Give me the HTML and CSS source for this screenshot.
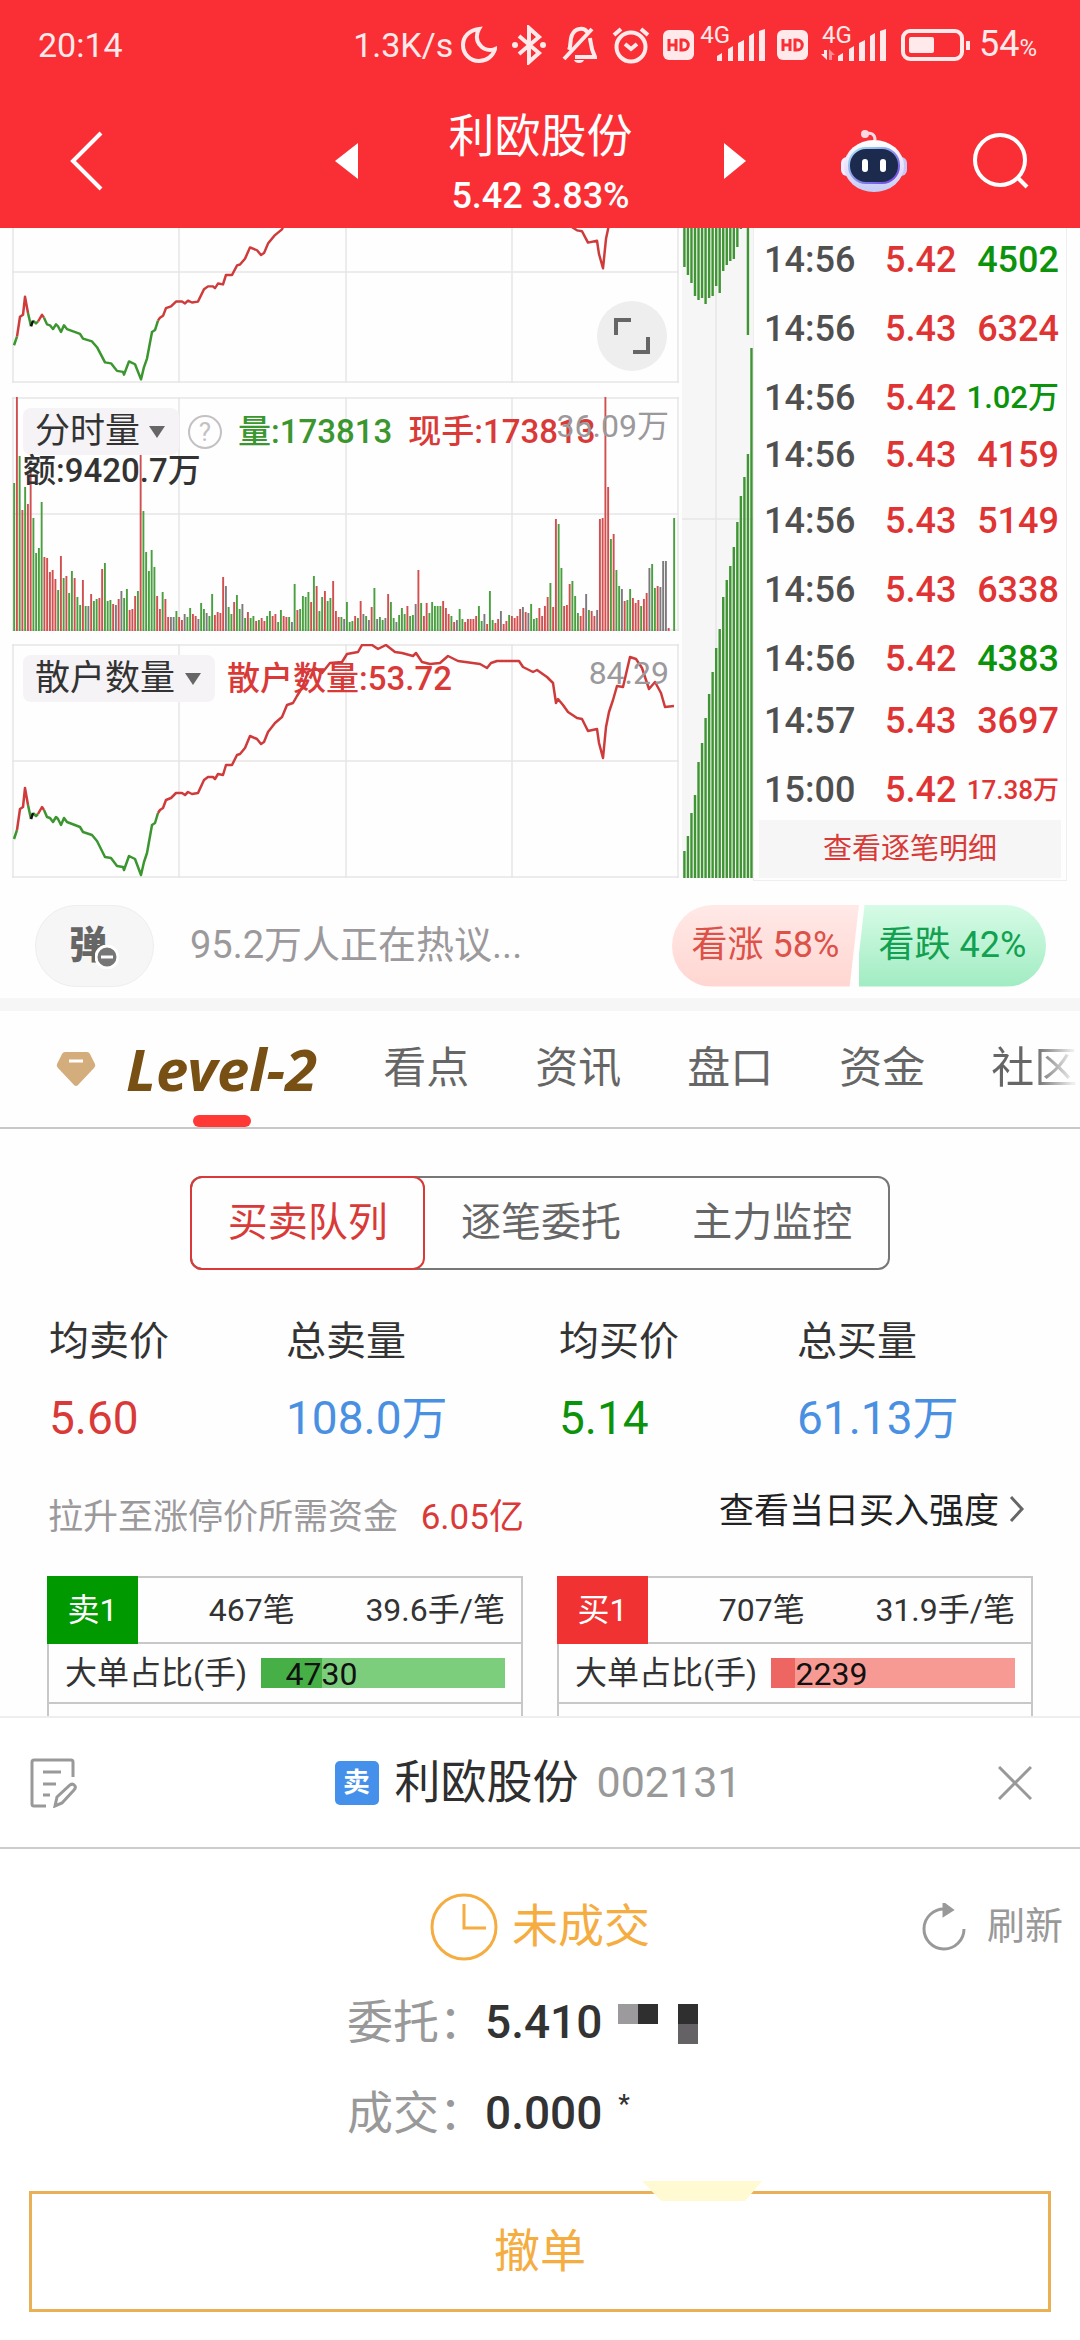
FILE: index.html
```html
<!DOCTYPE html>
<html lang="zh-CN">
<head>
    <meta charset="UTF-8">
    <meta name="viewport" content="width=device-width, initial-scale=1.0">
    <title>利欧股份 002131</title>
    <link rel="stylesheet" href="styles.css">
</head>
<body>
    <header class="header">
        <div class="status">
            <span class="clock">20:14</span>
            <span class="speed">1.3K/s</span>
            <svg class="s-icon moon" width="36" height="38" viewBox="0 0 36 38"><path d="M18 3C8 4 2 11 2 19c0 9 7 16 16 16 8 0 14-5 16-12-5 2-11 1-15-4-4-4-4-11-1-16z"/></svg>
            <svg class="s-icon bt" width="36" height="40" viewBox="0 0 36 40"><path d="M8 11l20 17-10 9V3l10 9L8 29"/><circle class="solid" cx="4" cy="20" r="3"/><circle class="solid" cx="32" cy="20" r="3"/></svg>
            <svg class="s-icon bell" width="36" height="40" viewBox="0 0 36 40"><path d="M3 34L31 4M8 25c2-4 1-11 3-15 3-7 12-8 15-3M29 13c1 7 1 11 5 19H14"/><path class="solid" d="M13 35h10c-1 4-9 4-10 0z"/></svg>
            <svg class="s-icon alarm" width="40" height="38" viewBox="0 0 40 38"><circle cx="20" cy="21" r="14.500"/><path d="M14 18l6 5 6-5M3 9l7-6M37 9l-7-6"/></svg>
            <svg class="s-icon hd" width="31" height="30" viewBox="0 0 31 30"><rect class="solid" width="31" height="30" rx="6"/><path class="cut" d="M6 9v12M13 9v12M6 15h7M18 10v10h2c7 0 7-10 0-10z"/></svg>
            <span class="net">4G</span>
            <svg class="s-icon bars" width="49" height="32" viewBox="0 0 49 32"><path class="solid" d="M1 27l5-3v8H1zM12 20l5-3v15h-5zM22 14l6-3v21h-6zM33 7l5-3v28h-5zM43 2l6-2v32h-6z"/></svg>
            <svg class="s-icon hd" width="31" height="30" viewBox="0 0 31 30"><rect class="solid" width="31" height="30" rx="6"/><path class="cut" d="M6 9v12M13 9v12M6 15h7M18 10v10h2c7 0 7-10 0-10z"/></svg>
            <span class="net second">4G</span>
            <svg class="s-icon bars-data" width="66" height="32" viewBox="-17 0 66 32"><path class="solid" d="M1 27l5-3v8H1zM12 20l5-3v15h-5zM22 14l6-3v21h-6zM33 7l5-3v28h-5zM43 2l6-2v32h-6z"/><path class="solid" d="M-13 21h3v10l-6-6h3z"/><path class="dim" d="M-8 31h3v-5h3l-6-6z"/></svg>
            <svg class="s-icon batt" width="70" height="32" viewBox="0 0 70 32"><rect x="2" y="2" width="59" height="28" rx="7"/><rect class="solid" x="8" y="8" width="25" height="16" rx="2"/><path d="M67 12v9"/></svg>
            <span class="charge">54<small>%</small></span>
        </div>
        <div class="titlebar">
            <button class="icon-btn back" aria-label="返回"><svg width="36" height="60" viewBox="0 0 36 60"><path d="M32 2L4 30l28 28"/></svg></button>
            <div class="stock">
                <button class="icon-btn" aria-label="上一只"><svg width="24" height="36" viewBox="0 0 24 36"><path class="solid" d="M0 18L23 0v36z"/></svg></button>
                <div class="stock-name">
                    <h1>利欧股份</h1>
                    <p>5.42 3.83%</p>
                </div>
                <button class="icon-btn" aria-label="下一只"><svg width="24" height="36" viewBox="0 0 24 36"><path class="solid" d="M23 18L1 0v36z"/></svg></button>
            </div>
            <button class="icon-btn robot" aria-label="助手">
                <svg width="68" height="64" viewBox="0 0 68 64">
                    <defs>
                        <linearGradient id="shell" x1="0" y1="0" x2="0" y2="1"><stop offset="0" stop-color="#fff"/><stop offset=".6" stop-color="#e4dcfb"/><stop offset="1" stop-color="#c3cdf5"/></linearGradient>
                        <linearGradient id="rim" x1="0" y1="0" x2="1" y2="1"><stop offset="0" stop-color="#a5e6f5"/><stop offset="1" stop-color="#6a3fe0"/></linearGradient>
                    </defs>
                    <path d="M25 5c6-2 10 0 10 6" stroke="#fbd9e2" stroke-width="3" fill="none"/>
                    <circle cx="25" cy="5" r="4" fill="#fbd9e2"/>
                    <rect x="1" y="28" width="12" height="19" rx="6" fill="#f1ecff"/>
                    <rect x="55" y="28" width="12" height="19" rx="6" fill="#c9c6f7"/>
                    <ellipse cx="34" cy="37" rx="30" ry="26" fill="url(#shell)"/>
                    <rect x="9" y="19" width="50" height="35" rx="17" fill="#1c2a4e" stroke="url(#rim)" stroke-width="2"/>
                    <rect x="22" y="30" width="6" height="13" rx="3" fill="#fff"/>
                    <rect x="40" y="30" width="6" height="13" rx="3" fill="#fff"/>
                </svg>
            </button>
            <button class="icon-btn" aria-label="搜索"><svg width="58" height="58" viewBox="0 0 58 58"><circle cx="28" cy="28" r="25"/><path d="M46 46l9 9"/></svg></button>
        </div>
    </header>

    <section class="market">
        <div class="charts">
            <div class="chart chart-top">
                <svg class="plot" viewBox="0 0 667 155" preserveAspectRatio="none">
                    <path class="grid" d="M1 0V155M167 0V155M334 0V155M500 0V155M666 0V155M0 44H667M0 154H667"/>
                    <g class="retail" transform="translate(0 -68) scale(1 .95)"></g>
                </svg>
                <button class="expand" aria-label="全屏"><svg width="36" height="36" viewBox="0 0 36 36"><path d="M2 17V2h15M34 19v15H19"/></svg></button>
            </div>
            <div class="chart">
                <svg class="plot" viewBox="0 0 667 234" preserveAspectRatio="none">
                    <path class="grid" d="M1 0V234M167 0V234M334 0V234M500 0V234M666 0V234M0 1H667M0 117H667M0 233H667"/>
                    <g id="volume"></g>
                </svg>
                <div class="legend">
                    <span class="picker three"><select aria-label="成交指标"><option>分时量</option></select></span>
                    <button class="help" aria-label="说明">?</button>
                    <b class="down">量:173813</b>
                    <b class="up">现手:173813</b>
                </div>
                <b class="amount">额:9420.7万</b>
                <span class="max">36.09万</span>
            </div>
            <div class="chart">
                <svg class="plot" viewBox="0 0 667 234" preserveAspectRatio="none">
                    <path class="grid" d="M1 0V234M167 0V234M334 0V234M500 0V234M666 0V234M0 1H667M0 117H667M0 233H667"/>
                    <g class="retail"></g>
                </svg>
                <div class="legend">
                    <span class="picker four"><select aria-label="散户指标"><option>散户数量</option></select></span>
                    <b class="up">散户数量:53.72</b>
                </div>
                <span class="max">84.29</span>
            </div>
        </div>
        <svg class="depth" viewBox="0 0 71 650" preserveAspectRatio="none">
            <path class="grid" d="M34 0V650M0 291H71"/>
            <g id="depth"></g>
        </svg>
        <div class="ticks">
            <table>
                <tr class="first"><td>14:56</td><td class="up">5.42</td><td class="down">4502</td></tr>
                <tr><td>14:56</td><td class="up">5.43</td><td class="up">6324</td></tr>
                <tr><td>14:56</td><td class="up">5.42</td><td class="down mid">1.02万</td></tr>
                <tr class="tight"><td>14:56</td><td class="up">5.43</td><td class="up">4159</td></tr>
                <tr><td>14:56</td><td class="up">5.43</td><td class="up">5149</td></tr>
                <tr><td>14:56</td><td class="up">5.43</td><td class="up">6338</td></tr>
                <tr><td>14:56</td><td class="up">5.42</td><td class="down">4383</td></tr>
                <tr class="first"><td>14:57</td><td class="up">5.43</td><td class="up">3697</td></tr>
                <tr><td>15:00</td><td class="up">5.42</td><td class="up small">17.38万</td></tr>
            </table>
            <button class="detail">查看逐笔明细</button>
        </div>
    </section>

    <section class="talk">
        <button class="danmu" aria-label="弹幕">弹<svg width="24" height="24" viewBox="0 0 24 24"><circle cx="12" cy="12" r="11"/><path d="M6 12h12"/></svg></button>
        <a class="hot" href="#">95.2万人正在热议...</a>
        <div class="vote">
            <button class="bull">看涨 58%</button>
            <button class="bear">看跌 42%</button>
        </div>
    </section>

    <nav class="tabs">
        <svg width="40" height="36" viewBox="0 0 40 36"><path d="M9 1h22q2 0 3 2l5 10q1 2-1 4L22 34q-2 2-4 0L2 17q-2-2-1-4L6 3q1-2 3-2z" fill="#d3ae7c"/><path d="M13 10h14" stroke="#fff" stroke-width="3"/></svg>
        <a class="active" href="#">Level-2</a>
        <a href="#">看点</a>
        <a href="#">资讯</a>
        <a href="#">盘口</a>
        <a href="#">资金</a>
        <a href="#">社区</a>
    </nav>

    <main class="level2">
        <div class="segment">
            <button class="on">买卖队列</button>
            <button>逐笔委托</button>
            <button>主力监控</button>
        </div>
        <dl class="summary">
            <div><dt>均卖价</dt><dd class="up">5.60</dd></div>
            <div><dt>总卖量</dt><dd class="blue">108.0万</dd></div>
            <div><dt>均买价</dt><dd class="down">5.14</dd></div>
            <div><dt>总买量</dt><dd class="blue">61.13万</dd></div>
        </dl>
        <div class="funds">
            <p>拉升至涨停价所需资金 <span class="up">6.05亿</span></p>
            <a href="#">查看当日买入强度<svg width="16" height="28" viewBox="0 0 16 28"><path d="M2 2l11 12L2 26"/></svg></a>
        </div>
        <div class="queues">
            <div class="queue sell">
                <div class="queue-head"><b>卖1</b><span>467笔</span><span>39.6手/笔</span></div>
                <div class="queue-row"><span>大单占比(手)</span><div class="ratio"><i style="width: 25%"></i><em style="left: 10%">4730</em></div></div>
                <div class="queue-next"></div>
            </div>
            <div class="queue buy">
                <div class="queue-head"><b>买1</b><span>707笔</span><span>31.9手/笔</span></div>
                <div class="queue-row"><span>大单占比(手)</span><div class="ratio"><i style="width: 10%"></i><em style="left: 10%">2239</em></div></div>
                <div class="queue-next"></div>
            </div>
        </div>
    </main>

    <section class="sheet">
        <div class="sheet-head">
            <button class="icon-btn" aria-label="记录"><svg width="48" height="50" viewBox="0 0 48 50"><path d="M43 19V4q0-2-2-2H4Q2 2 2 4v42q0 2 2 2h12M13 14h18M13 26h13M13 37h7M25 48l2-9 13-12q3-2 5 1 1 2-1 4L32 45z"/></svg></button>
            <h2><span class="tag">卖</span>利欧股份 <span class="code">002131</span></h2>
            <button class="icon-btn" aria-label="关闭"><svg width="34" height="34" viewBox="0 0 34 34"><path d="M1 1l32 32M33 1L1 33"/></svg></button>
        </div>
        <div class="state">
            <svg width="68" height="68" viewBox="0 0 68 68"><circle cx="34" cy="34" r="32"/><path d="M34 11v24h22"/></svg>
            <strong>未成交</strong>
            <button class="refresh"><svg width="46" height="48" viewBox="0 0 46 48"><path d="M24 6A20 20 0 1 0 43 26"/><path class="solid" d="M23 1l8 6-8 5z"/></svg>刷新</button>
        </div>
        <dl class="order">
            <dt>委托：</dt>
            <dd>5.410<svg width="80" height="40" viewBox="0 0 80 40"><path fill="#9d9a9d" d="M0 0h20v20H0z"/><path fill="#2f2f2f" d="M20 0h20v20H20zM60 0h20v20H60z"/><path fill="#646264" d="M60 20h20v20H60z"/></svg></dd>
            <dt>成交：</dt>
            <dd>0.000<sup>*</sup></dd>
        </dl>
        <div class="cancel-wrap">
            <button class="cancel">撤单</button>
        </div>
    </section>

    <script>
        // one entry a minute: colour letter, then height in px
        const volume = "g148 r235 g175 r121 g144 r127 r159 g113 g78 g83 g129 r74 r73 r59 r61 r52 g41 r75 g53 r55 g38 g60 r53 g34 g26 r51 g25 k25 r37 g30 g32 r33 r62 g68 g30 g31 r27 k26 r32 k40 g33 g42 r21 r22 r35 g40 r180 g120 g79 g60 g81 g64 r35 r22 g39 r32 " +
            "r14 k14 k14 g20 r14 r11 k17 g14 g23 r17 r15 k12 g28 g22 k18 g15 g37 r16 r19 r18 r54 k45 g24 g17 r29 g36 g22 k27 g13 r19 g13 g15 r10 g11 r13 r10 g15 g20 r15 r17 g9 g21 r15 r14 g14 k9 g47 r21 g22 g35 g34 g39 r29 g55 r45 g20 g34 r40 g30 g33 r50 r20 r14 g14 k12 g29 g9 g10 r15 g13 r30 " +
            "k17 g15 k11 r24 g43 k12 g14 g11 k13 r37 g29 g13 k9 g16 g23 g17 r25 g15 g16 k27 r61 g28 r15 r28 g18 g29 g25 g25 g25 r30 r23 r17 g15 r9 k11 g22 g12 r9 r12 r12 r12 r15 g25 g10 k17 r7 g40 g11 r8 r12 k20 r7 r10 g16 r15 r13 r15 r22 k24 r19 k18 g27 g12 g13 r23 r15 r25 r34 g48 r24 " +
            "r112 g107 g63 r25 r26 r47 g50 g35 g18 r15 r23 k37 g21 r20 r15 k21 r112 r113 r234 r144 g92 r97 g61 g45 k42 r30 g31 g42 r33 r28 r31 g25 r32 r38 k63 g67 g43 r45 k44 k70 k70 r3 k0 g113";
        const tones = { r: "#d24f4f", g: "#4a9f40", k: "#7d7a7d" };
        let bars = "";
        volume.split(" ").forEach((item, i) => {
            const h = Number(item.slice(1));
            bars += `<rect x="${(1.2 + i * 2.75).toFixed(2)}" y="${234 - h}" width="1.9" height="${h}" fill="${tones[item[0]]}"/>`;
        });
        document.getElementById("volume").innerHTML = bars;

        const retail = [
            ["green", "2,195 5,186"],
            ["red", "5,186 8,165 11,163 13,144 16,161"],
            ["green", "16,161 19,175"],
            ["green", "21,169 24,172 26,170"],
            ["red", "26,170 30,163 32,166"],
            ["green", "32,166 35,173 38,174 41,178 44,173 46,175 49,181 52,174 55,178 68,183 71,188 80,191 85,197 93,213 99,214 105,222 111,223 112,226 117,212 123,215 129,231 132,218 135,209 140,181 143,179 146,169"],
            ["red", "146,169 148,166 151,164 154,156 159,154 164,149 170,149 173,151 176,148 180,150 186,149 192,136 196,133 201,133 203,135 206,130 211,131 214,121 220,121 225,111 228,110 233,104 238,92 245,95 249,100 252,98 256,88 263,79 270,73 275,61 281,59 285,52 290,44 296,28 303,24 310,29 318,19 330,18 335,10 346,8 350,1 360,1 366,5 374,1 383,8 390,9 401,12 404,9 410,18 418,20 428,19 436,12 446,17 468,20 475,24 479,19 485,17 507,17 511,23 521,28 525,26 535,33 541,39 544,59 546,55 551,61 556,68 565,74 570,75 576,87 585,85 587,99 591,114 594,83 597,68 601,56 605,42 611,43 618,13 624,15 630,24 637,45 643,38 649,49 653,63 662,62"],
            ["black", "19,175 21,169"]
        ];
        document.querySelectorAll(".retail").forEach(g => {
            g.innerHTML = retail.map(([tone, pts]) => `<polyline class="line ${tone}" points="${pts}"/>`).join("");
        });

        // sell side hangs from the top, buy side grows from the bottom
        const above = [39, 47, 55, 68, 72, 70, 76, 70, 68, 58, 65, 43, 37, 33, 31, 19, 1, 0, 107, 0];
        const below = [27, 42, 65, 83, 116, 135, 160, 184, 206, 230, 249, 281, 298, 312, 331, 356, 382, 401, 424, 530];
        let depth = "";
        for (let i = 0; i < 20; i++) {
            const x = (1.2 + i * 3.53).toFixed(2);
            depth += `<rect x="${x}" y="0" width="2.4" height="${above[i]}"/><rect x="${x}" y="${650 - below[i]}" width="2.4" height="${below[i]}"/>`;
        }
        document.getElementById("depth").innerHTML = depth;
    </script>
</body>
</html>
```
FILE: styles.css
```css
* {
    box-sizing: border-box;
}
body {
    margin: 0;
    background: #fefefe;
    color: #333;
    font-family: Roboto, "Noto Sans CJK SC", sans-serif;
    font-size: 36px;
    line-height: 1.2;
}
h1, h2, p, dl, dd {
    margin: 0;
    font-weight: 400;
}
button, select {
    border: none;
    background: none;
    padding: 0;
    margin: 0;
    font: inherit;
    color: inherit;
}
a {
    color: inherit;
    text-decoration: none;
}
svg {
    flex: none;
}
.up {
    color: #d93a38;
}
.down {
    color: #0c930c;
}
.blue {
    color: #4a90e2;
}

/* header */
.header {
    height: 228px;
    background: #f92f35;
    color: #fff;
}
.status {
    display: flex;
    align-items: center;
    height: 90px;
    padding: 0 43px 0 38px;
    font-size: 34px;
    color: #ffe9ea;
}
.clock {
    flex: 1;
}
.s-icon {
    fill: none;
    stroke: #ffe9ea;
    stroke-width: 4;
}
.s-icon .solid {
    fill: #ffe9ea;
    stroke: none;
}
.s-icon .cut {
    stroke: #f92f35;
    stroke-width: 3;
}
.s-icon .dim {
    fill: #ff8f93;
    stroke: none;
}
.moon {
    margin-left: 8px;
}
.bt, .bell, .alarm {
    margin-left: 14px;
}
.hd {
    margin-left: 12px;
}
.net {
    align-self: flex-start;
    margin: 22px -14px 0 6px;
    font-size: 24px;
    line-height: 26px;
}
.net.second {
    margin-left: 14px;
    margin-right: -32px;
}
.batt {
    margin: 0 8px 0 15px;
}
.charge {
    font-size: 36px;
}
.charge small {
    font-size: 24px;
}
.titlebar {
    display: flex;
    align-items: center;
    height: 138px;
    padding: 0 50px 0 69px;
}
.icon-btn {
    display: flex;
}
.icon-btn svg {
    fill: none;
    stroke: #fff;
    stroke-width: 4;
}
.titlebar .solid {
    fill: #fff;
    stroke: none;
}
.titlebar .icon-btn svg {
    margin-top: 3px;
}
.titlebar .robot svg {
    stroke: none;
}
.stock {
    flex: 1;
    display: flex;
    align-items: center;
    justify-content: center;
    gap: 90px;
    padding-left: 136px;
}
.stock-name {
    padding-top: 14px;
    text-align: center;
}
.stock h1 {
    font-size: 46px;
    line-height: 60px;
}
.stock p {
    font-size: 36px;
    font-weight: 500;
    line-height: 60px;
}
.robot {
    margin-right: 64px;
}

/* charts */
.market {
    display: flex;
    align-items: flex-start;
    padding-right: 13px;
}
.charts {
    flex: 1;
    padding-left: 12px;
}
.chart {
    position: relative;
    height: 234px;
    margin-bottom: 13px;
}
.chart:last-child {
    margin-bottom: 0;
}
.chart-top {
    height: 155px;
    margin-bottom: 14px;
}
.plot {
    display: block;
    width: 100%;
    height: 100%;
}
.grid {
    fill: none;
    stroke: #e6e6e6;
    stroke-width: 1.500;
}
.line {
    fill: none;
    stroke-width: 2.500;
    stroke-linejoin: round;
}
.line.red {
    stroke: #cf3b3b;
}
.line.green {
    stroke: #3b962f;
}
.line.black {
    stroke: #111;
}
.expand {
    position: absolute;
    right: 12px;
    bottom: 12px;
    display: flex;
    align-items: center;
    justify-content: center;
    width: 70px;
    height: 70px;
    border-radius: 50%;
    background: #eee;
}
.expand svg {
    fill: none;
    stroke: #666;
    stroke-width: 4;
}
.legend {
    position: absolute;
    top: 11px;
    left: 11px;
    display: flex;
    align-items: center;
    height: 47px;
    font-size: 34px;
    white-space: nowrap;
}
.legend b, .amount {
    font-size: 33px;
    font-weight: 500;
}
.legend .down {
    margin-right: 16px;
    color: #3b962f;
}
.picker {
    position: relative;
    height: 47px;
    margin-right: 12px;
    border-radius: 8px;
    background: #f6f3f6;
}
.picker.three {
    width: 156px;
    margin-right: 9px;
}
.picker.four {
    width: 192px;
}
.picker select {
    appearance: none;
    width: 100%;
    height: 47px;
    padding-left: 12px;
    font-size: 35px;
    line-height: 47px;
}
.picker::after {
    content: "";
    position: absolute;
    right: 14px;
    top: 18px;
    border: 8px solid transparent;
    border-top: 12px solid #666;
    border-bottom: none;
    pointer-events: none;
}
.help {
    width: 34px;
    height: 34px;
    margin-right: 16px;
    border: 2px solid #c4c1c4;
    border-radius: 50%;
    color: #c4c1c4;
    font-size: 26px;
    line-height: 30px;
}
.amount {
    position: absolute;
    top: 54px;
    left: 11px;
}
.max {
    position: absolute;
    top: 10px;
    right: 10px;
    color: #9b999b;
    font-size: 32px;
}
.depth {
    width: 71px;
    height: 650px;
    margin-left: 3px;
    background: #f6f6f6;
}
.depth rect {
    fill: #3f9433;
}
.ticks {
    width: 314px;
    height: 653px;
    padding: 0 5px;
    border: 1px solid #eee;
    border-top: none;
}
.ticks table {
    width: 100%;
    border-collapse: collapse;
}
.ticks td {
    height: 69px;
    padding: 0;
    vertical-align: bottom;
    color: #505050;
    font-weight: 500;
    line-height: 60px;
}
.ticks td:first-child {
    width: 126px;
    padding-left: 5px;
}
.ticks td:last-child {
    width: 98px;
    padding-right: 2px;
    text-align: right;
}
.ticks .first td {
    height: 62px;
}
.ticks .tight td {
    height: 54px;
    line-height: 54px;
}
.ticks .up {
    color: #e03434;
}
.ticks .down {
    color: #0c930c;
}
.ticks .mid {
    font-size: 31px;
}
.ticks .small {
    font-size: 26px;
}
.detail {
    display: block;
    width: 100%;
    height: 58px;
    background: #f6f6f6;
    color: #d93a38;
    font-size: 29px;
}

/* discussion */
.talk {
    display: flex;
    align-items: center;
    height: 118px;
    padding: 12px 34px 0 35px;
    border-bottom: 1px solid #f6f6f6;
}
.danmu {
    position: relative;
    width: 119px;
    height: 82px;
    border: 1px solid #eee;
    border-radius: 41px;
    background: #f6f6f6;
    color: #666;
    font-size: 38px;
    font-weight: 900;
    text-align: left;
    padding-left: 33px;
}
.danmu svg {
    position: absolute;
    right: 34px;
    bottom: 17px;
    fill: #777;
    stroke: #fff;
    stroke-width: 3;
}
.hot {
    flex: 1;
    padding-left: 36px;
    color: #9b999b;
    font-size: 38px;
}
.vote {
    display: flex;
    width: 374px;
    height: 82px;
    border-radius: 41px;
    overflow: hidden;
    font-size: 36px;
}
.vote button {
    flex: 1;
    white-space: nowrap;
}
.bull {
    background: linear-gradient(#ffe9e7, #ffd6d1);
    color: #dc5148;
    clip-path: polygon(0 0, 100% 0, 95% 100%, 0 100%);
}
.bear {
    background: linear-gradient(#d6fbe6, #a1ecc2);
    color: #12a150;
    clip-path: polygon(3% 0, 100% 0, 100% 100%, -2% 100%);
}

/* tabs */
.tabs {
    display: flex;
    align-items: center;
    height: 130px;
    padding-left: 56px;
    border-top: 12px solid #f6f6f6;
    border-bottom: 2px solid #c8c8c8;
    overflow: hidden;
    color: #666;
    font-size: 43px;
    white-space: nowrap;
}
.tabs a {
    margin-right: 66px;
}
.tabs a:last-child {
    margin-right: 0;
    background: linear-gradient(90deg, #666 50%, #eee 95%);
    background-clip: text;
    color: transparent;
}
.tabs .active {
    position: relative;
    margin-left: 30px;
    color: #785014;
    font-family: "Noto Sans", sans-serif;
    font-size: 58px;
    font-style: italic;
    font-weight: 700;
    line-height: 116px;
}
.tabs .active::after {
    content: "";
    position: absolute;
    left: 50%;
    bottom: 0;
    width: 58px;
    height: 12px;
    margin-left: -29px;
    border-radius: 6px;
    background: #ff3a36;
}

/* level 2 */
.level2 {
    padding: 47px 47px 0;
}
.segment {
    display: flex;
    width: 71%;
    height: 94px;
    margin: 0 auto;
    border: 2px solid #777;
    border-radius: 12px;
    color: #666;
    font-size: 40px;
}
.segment button {
    flex: 1;
}
.segment .on {
    margin: -2px 0 -2px -2px;
    border: 2px solid #d93a38;
    border-radius: 12px;
    color: #d93a38;
}
.summary {
    display: grid;
    grid-template-columns: 237px 273px 238px 1fr;
    padding: 40px 0 0 2px;
    color: #333;
}
.summary dt {
    font-size: 40px;
    line-height: 64px;
}
.summary dd {
    padding-top: 12px;
    font-size: 46px;
    line-height: 64px;
}
.funds {
    display: flex;
    justify-content: space-between;
    padding: 34px 8px 0 1px;
    font-size: 35px;
    line-height: 56px;
}
.funds p {
    padding-top: 6px;
    color: #9b999b;
}
.funds p span {
    margin-left: 14px;
}
.funds a {
    color: #222;
}
.funds svg {
    margin-left: 10px;
    fill: none;
    stroke: #666;
    stroke-width: 3;
}
.queues {
    display: grid;
    grid-template-columns: 1fr 1fr;
    gap: 34px;
    padding-top: 30px;
}
.queue {
    border: 2px solid #c8c8c8;
    border-bottom: none;
    font-size: 32px;
}
.queue-head {
    display: flex;
    align-items: center;
    justify-content: space-between;
    height: 66px;
    padding-right: 16px;
    border-bottom: 2px solid #c8c8c8;
}
.queue-head b {
    width: 91px;
    height: 68px;
    margin: -2px 0 -2px -2px;
    color: #fff;
    font-weight: 400;
    line-height: 68px;
    text-align: center;
}
.sell b {
    background: #009900;
}
.buy b {
    background: #f03233;
}
.queue-row {
    display: flex;
    align-items: center;
    height: 60px;
    padding: 0 16px;
    border-bottom: 2px solid #c8c8c8;
}
.ratio {
    position: relative;
    flex: 1;
    height: 30px;
    margin-left: 14px;
    color: #111;
}
.sell .ratio {
    background: #7cce7c;
}
.buy .ratio {
    background: #f69a93;
}
.ratio i {
    display: block;
    height: 30px;
}
.sell .ratio i {
    background: #46b046;
}
.buy .ratio i {
    background: #ee6661;
}
.ratio em {
    position: absolute;
    top: 0;
    font-style: normal;
    line-height: 32px;
}
.queue-next {
    height: 12px;
}

/* order sheet */
.sheet {
    border-top: 2px solid #eee;
    background: #fff;
}
.sheet-head {
    display: flex;
    align-items: center;
    justify-content: space-between;
    height: 131px;
    padding: 0 48px 0 30px;
    border-bottom: 2px solid #ccc;
}
.sheet-head .icon-btn svg {
    stroke: #999;
    stroke-width: 3;
}
.sheet h2 {
    display: flex;
    align-items: center;
    font-size: 46px;
    color: #2f2f2f;
}
.tag {
    width: 44px;
    height: 44px;
    margin-right: 16px;
    border-radius: 5px;
    background: #4490ea;
    color: #fff;
    font-size: 27px;
    font-weight: 700;
    line-height: 44px;
    text-align: center;
}
.code {
    margin-left: 18px;
    color: #999;
    font-size: 43px;
}
.state {
    position: relative;
    display: flex;
    align-items: center;
    justify-content: center;
    gap: 14px;
    height: 68px;
    margin-top: 44px;
    color: #f5ad42;
    font-size: 46px;
}
.state strong {
    font-weight: 400;
}
.state svg {
    fill: none;
    stroke: #f5ad42;
    stroke-width: 3;
}
.refresh {
    position: absolute;
    right: 17px;
    display: flex;
    align-items: center;
    gap: 20px;
    color: #999;
    font-size: 38px;
}
.refresh svg {
    stroke: #999;
}
.refresh .solid {
    fill: #999;
}
.order {
    display: grid;
    grid-template-columns: 138px 1fr;
    padding: 16px 0 0 347px;
    font-size: 46px;
    line-height: 91px;
}
.order dt {
    color: #999;
}
.order dd {
    font-weight: 500;
}
.order svg {
    margin-left: 16px;
    vertical-align: -6px;
}
.order sup {
    margin-left: 16px;
    font-size: 26px;
    line-height: 0;
}
.cancel-wrap {
    position: relative;
    padding: 32px 29px 28px;
}
.cancel-wrap::after {
    content: "";
    position: absolute;
    top: 22px;
    left: 642px;
    width: 120px;
    height: 20px;
    background: #fffad2;
    clip-path: polygon(0 0, 100% 0, 86% 100%, 16% 100%);
}
.cancel {
    display: block;
    width: 100%;
    height: 121px;
    border: 3px solid #eab055;
    color: #f5ad42;
    font-size: 46px;
}
```
